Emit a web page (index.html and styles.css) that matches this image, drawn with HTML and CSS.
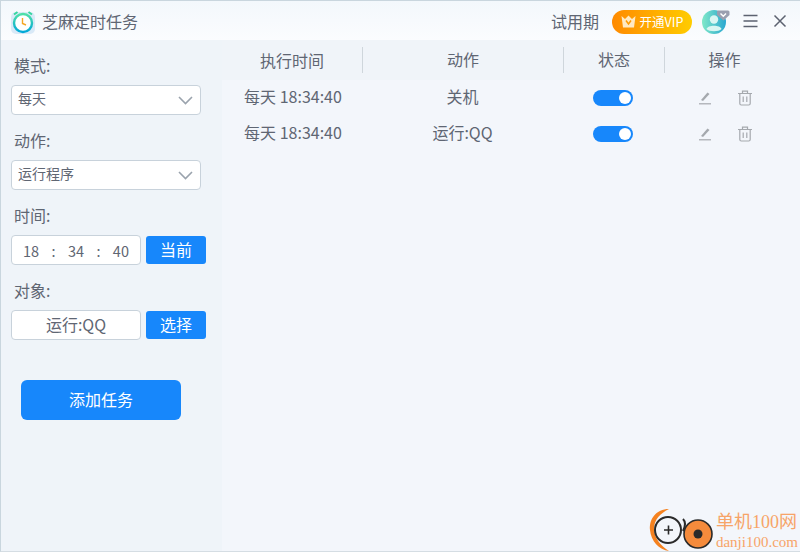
FILE: index.html
```html
<!DOCTYPE html>
<html lang="zh-CN">
<head>
  <meta charset="UTF-8">
  <title>芝麻定时任务</title>
  <link rel="stylesheet" href="styles.css">
</head>
<body>
  <div class="window">
    <header class="titlebar">
      <svg class="app-icon" width="24" height="24" viewBox="0 0 24 24">
        <defs>
          <linearGradient id="ring" x1="0" y1="0" x2="0" y2="1">
            <stop offset="0" stop-color="#4fe0a8"/>
            <stop offset="1" stop-color="#00a8d8"/>
          </linearGradient>
        </defs>
        <rect x="0" y="2" width="24" height="22" rx="5" fill="#d9e9f7"/>
        <circle cx="12" cy="13" r="9" fill="#fff" stroke="url(#ring)" stroke-width="2.4"/>
        <path d="M3 4.5 L6.5 2 M21 4.5 L17.5 2" stroke="#36d6a0" stroke-width="2" fill="none"/>
        <path d="M11.5 8 L11.5 13.5 L15 15" stroke="#f5a623" stroke-width="1.4" fill="none"/>
      </svg>
      <span class="app-title">芝麻定时任务</span>
      <span class="trial">试用期</span>
      <span class="vip">
        <svg width="15" height="13" viewBox="0 0 15 13"><path d="M0.5 1 L4 4 L7.5 0.5 L11 4 L14.5 1 L13 12.5 L2 12.5 Z" fill="#ffe9c2"/><path d="M5 5.5 L7.5 9 L10 5.5" stroke="#ff9a00" stroke-width="1.5" fill="none"/></svg>
        开通VIP
      </span>
      <svg class="avatar" width="28" height="26" viewBox="0 0 28 26">
        <defs>
          <linearGradient id="ava" x1="0" y1="0" x2="1" y2="0">
            <stop offset="0" stop-color="#7fe8c8"/>
            <stop offset="1" stop-color="#2aa7d0"/>
          </linearGradient>
        </defs>
        <circle cx="12" cy="13" r="12" fill="url(#ava)"/>
        <circle cx="12" cy="10.5" r="4.2" fill="#d8f6f2"/>
        <path d="M4.5 20 C5.5 15.5 18.5 15.5 19.5 20 C17 23 7 23 4.5 20 Z" fill="#d8f6f2"/>
        <path d="M16 1.500 H26 Q27.500 1.500 27.500 3 V6 L21.500 11.500 L15 6 V3 Q15 1.500 16 1.500 Z" fill="#9a9fb0"/>
        <path d="M18.500 4.500 L21.300 7.300 L24 4.500" stroke="#fff" stroke-width="1.4" fill="none"/>
      </svg>
      <svg class="win-btn menu-btn" width="15" height="14" viewBox="0 0 15 14"><path d="M0.500 1.500 H14.500 M0.500 7 H14.500 M0.500 12.500 H14.500" stroke="#5c6270" stroke-width="1.600"/></svg>
      <svg class="win-btn close-btn" width="14" height="14" viewBox="0 0 14 14"><path d="M1.500 1.500 L12.500 12.500 M12.500 1.500 L1.500 12.500" stroke="#5c6270" stroke-width="1.500"/></svg>
    </header>

    <div class="content">
      <aside class="sidebar">
        <div class="field">
          <label class="field-label">模式:</label>
          <div class="select"><span>每天</span><svg width="15" height="9" viewBox="0 0 15 9"><path d="M1 1 L7.5 7.5 L14 1" stroke="#9aa3ad" stroke-width="1.6" fill="none"/></svg></div>
        </div>
        <div class="field">
          <label class="field-label">动作:</label>
          <div class="select"><span>运行程序</span><svg width="15" height="9" viewBox="0 0 15 9"><path d="M1 1 L7.5 7.5 L14 1" stroke="#9aa3ad" stroke-width="1.6" fill="none"/></svg></div>
        </div>
        <div class="field">
          <label class="field-label">时间:</label>
          <div class="input-row">
            <div class="input time-input"><span>18</span><span>:</span><span>34</span><span>:</span><span>40</span></div>
            <button class="btn">当前</button>
          </div>
        </div>
        <div class="field">
          <label class="field-label">对象:</label>
          <div class="input-row">
            <div class="input target-input">运行:QQ</div>
            <button class="btn">选择</button>
          </div>
        </div>
        <button class="add-btn">添加任务</button>
      </aside>

      <main class="main">
        <div class="table-head">
          <div class="col-time">执行时间</div>
          <div class="col-action sep">动作</div>
          <div class="col-state sep">状态</div>
          <div class="col-ops sep">操作</div>
        </div>
        <div class="table-row">
          <div class="col-time cell-text time-text">每天 18:34:40</div>
          <div class="col-action cell-text">关机</div>
          <div class="col-state"><span class="switch"></span></div>
          <div class="col-ops ops">
            <svg width="14" height="14" viewBox="0 0 14 14"><path d="M3 9 L9.5 1.5 L11.5 3 L5 10 Z" fill="#a5a9ae"/><path d="M1 12.8 H13" stroke="#a5a9ae" stroke-width="1.2"/></svg>
            <svg width="16" height="16" viewBox="0 0 16 16"><path d="M1 3.5 H15 M5.5 3.5 V1.2 H10.5 V3.5 M2.8 3.5 V13.5 Q2.8 15 4.3 15 H11.7 Q13.2 15 13.2 13.5 V3.5 M6.2 6.5 V12 M9.8 6.5 V12" stroke="#a5a9ae" stroke-width="1.2" fill="none"/></svg>
          </div>
        </div>
        <div class="table-row">
          <div class="col-time cell-text time-text">每天 18:34:40</div>
          <div class="col-action cell-text">运行:QQ</div>
          <div class="col-state"><span class="switch"></span></div>
          <div class="col-ops ops">
            <svg width="14" height="14" viewBox="0 0 14 14"><path d="M3 9 L9.5 1.5 L11.5 3 L5 10 Z" fill="#a5a9ae"/><path d="M1 12.8 H13" stroke="#a5a9ae" stroke-width="1.2"/></svg>
            <svg width="16" height="16" viewBox="0 0 16 16"><path d="M1 3.5 H15 M5.5 3.5 V1.2 H10.5 V3.5 M2.8 3.5 V13.5 Q2.8 15 4.3 15 H11.7 Q13.2 15 13.2 13.5 V3.5 M6.2 6.5 V12 M9.8 6.5 V12" stroke="#a5a9ae" stroke-width="1.2" fill="none"/></svg>
          </div>
        </div>
      </main>
    </div>

    <div class="watermark">
      <svg width="66" height="44" viewBox="0 0 66 44">
        <path d="M20 2 C7 2 0 12 1 23 C2 34 10 43 20 44 C12 39 5 31 5 22 C5 12 12 6 20 2 Z" fill="#f58220"/>
        <circle cx="19" cy="23" r="13" fill="#f3f6fb" stroke="#2a2a2a" stroke-width="2"/>
        <path d="M15 23 H24 M19.500 18.500 V27.500" stroke="#2a2a2a" stroke-width="1.600"/>
        <circle cx="49" cy="27" r="14" fill="#f58b3c" stroke="#2a2a2a" stroke-width="1.600"/>
        <circle cx="49" cy="27" r="4.500" fill="#2a2a2a"/>
        <path d="M34 12 C37 15 36 20 34 24" stroke="#2a2a2a" stroke-width="2" fill="none"/>
      </svg>
      <div class="wm-text">
        <div class="wm-cn">单机100网</div>
        <div class="wm-en">danji100.com</div>
      </div>
    </div>
  </div>
</body>
</html>
```

FILE: styles.css
```css
html, body {
  margin: 0;
  padding: 0;
}

body {
  font-family: "Noto Sans CJK SC", "Liberation Sans", sans-serif;
  color: #5f6673;
}

.window {
  position: relative;
  width: 800px;
  height: 552px;
  box-sizing: border-box;
  border-top: 1px solid #c9d6de;
  border-left: 1px solid #c9d6de;
  border-bottom: 1px solid #d5dde3;
  background: #f3f6fb;
  overflow: hidden;
  display: flex;
  flex-direction: column;
}

.titlebar {
  height: 39px;
  box-sizing: border-box;
  flex-shrink: 0;
  display: flex;
  align-items: center;
  padding: 2px 13px 0 10px;
  background: linear-gradient(#f3f8fc, #fbfcfe);
}

.app-title {
  margin: 0 0 2px 7px;
  font-size: 16px;
  flex: 1;
}

.trial {
  margin-bottom: 2px;
  font-size: 16px;
}

.vip {
  margin-left: 13px;
  width: 80px;
  height: 24px;
  border-radius: 12px;
  background: linear-gradient(90deg, #ff8a00, #ffcc00);
  color: #fff;
  font-size: 12.5px;
  display: flex;
  align-items: center;
  justify-content: center;
  gap: 4px;
}

.avatar {
  margin-left: 10px;
}

.win-btn {
  margin-bottom: 2px;
}

.menu-btn {
  margin-left: 13px;
}

.close-btn {
  margin-left: 15px;
}

.content {
  flex: 1;
  display: flex;
  min-height: 0;
}

.sidebar {
  width: 221px;
  flex-shrink: 0;
  box-sizing: border-box;
  padding: 16px 15px 0 10px;
  background: #eff4f9;
}

.field {
  margin-bottom: 16px;
}

.field-label {
  display: block;
  margin-left: 3px;
  height: 20px;
  line-height: 18px;
  margin-bottom: 9px;
  font-size: 16px;
}

.select {
  width: 190px;
  height: 30px;
  box-sizing: border-box;
  display: flex;
  align-items: center;
  justify-content: space-between;
  padding: 0 7px 0 6px;
  background: #fff;
  border: 1px solid #c8d2db;
  border-radius: 4px;
  font-size: 14px;
}

.select span {
  padding-bottom: 4px;
}

.input-row {
  display: flex;
  gap: 5px;
}

.input {
  width: 130px;
  height: 30px;
  box-sizing: border-box;
  background: #fff;
  border: 1px solid #c8d2db;
  border-radius: 4px;
}

.time-input {
  display: flex;
  align-items: center;
  justify-content: space-between;
  padding: 0 11px;
  font-size: 14.5px;
}

.target-input {
  text-align: center;
  line-height: 27px;
  font-size: 16px;
}

.btn {
  width: 60px;
  height: 28px;
  margin-top: 1px;
  padding: 0 0 3px;
  border: none;
  border-radius: 3px;
  background: #1787fb;
  color: #fff;
  font-family: inherit;
  font-size: 16px;
}

.add-btn {
  display: block;
  margin: 40px 0 0 10px;
  width: 160px;
  height: 40px;
  padding: 0 0 2px;
  border: none;
  border-radius: 6px;
  background: #1787fb;
  color: #fff;
  font-family: inherit;
  font-size: 16px;
}

.main {
  flex: 1;
  background: #f3f6fb;
}

.table-head {
  height: 40px;
  display: flex;
  align-items: center;
  background: #f0f4f9;
  font-size: 16px;
}

.table-row {
  height: 36px;
  display: flex;
  align-items: center;
  font-size: 16px;
}

.table-head > div,
.table-row > div {
  box-sizing: border-box;
  text-align: center;
}

.col-time {
  width: 140px;
}

.col-action {
  width: 201px;
}

.col-state {
  width: 101px;
}

.col-ops {
  width: 120px;
}

.cell-text {
  padding-bottom: 5px;
}

.time-text {
  padding-left: 2px;
}

.table-head .sep {
  border-left: 1px solid #cfd6dc;
  height: 26px;
  line-height: 24px;
}

.switch {
  position: relative;
  display: block;
  width: 40px;
  height: 16px;
  margin-left: 30px;
  border-radius: 8px;
  background: #1787fb;
}

.switch::after {
  content: "";
  position: absolute;
  top: 2px;
  right: 2px;
  width: 12px;
  height: 12px;
  border-radius: 50%;
  background: #fff;
}

.table-row > .ops {
  display: flex;
  justify-content: center;
  align-items: center;
  gap: 25px;
  padding-left: 3px;
}

.watermark {
  position: absolute;
  right: 2px;
  bottom: 0;
  display: flex;
  align-items: flex-end;
}

.wm-text {
  color: #f7a468;
  font-family: "Liberation Serif", "Noto Sans CJK SC", serif;
  margin-left: 1px;
  padding-bottom: 1px;
}

.wm-cn {
  font-size: 18px;
  line-height: 24px;
}

.wm-en {
  font-size: 15px;
  line-height: 16px;
}
```
